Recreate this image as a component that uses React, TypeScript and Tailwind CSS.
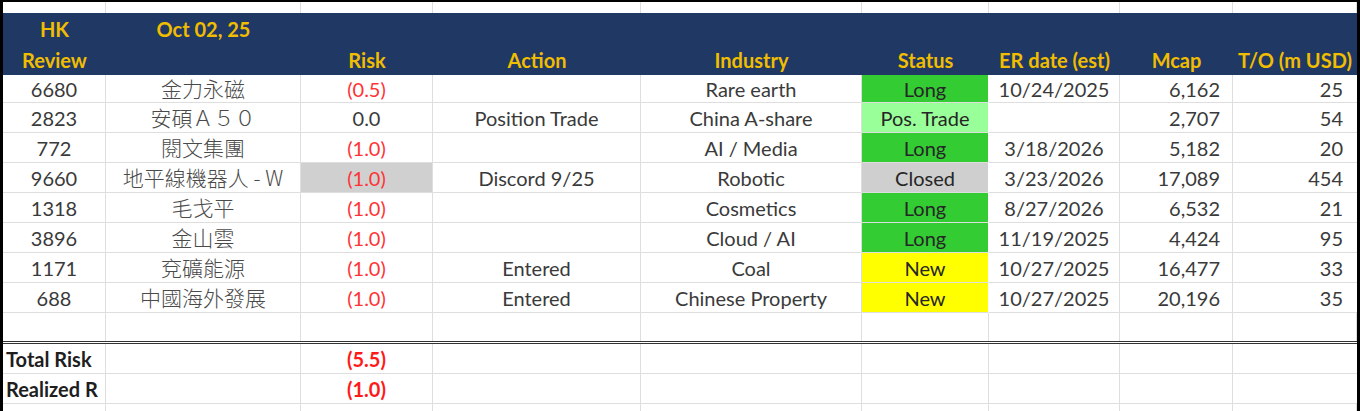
const rows = [
  { code: "6680", name: "金力永磁", risk: "(0.5)", action: "", industry: "Rare earth", status: "Long", er: "10/24/2025", mcap: "6,162", to: "25" },
  { code: "2823", name: "安碩Ａ５０", risk: "0.0", action: "Position Trade", industry: "China A-share", status: "Pos. Trade", er: "", mcap: "2,707", to: "54" },
  { code: "772", name: "閱文集團", risk: "(1.0)", action: "", industry: "AI / Media", status: "Long", er: "3/18/2026", mcap: "5,182", to: "20" },
  { code: "9660", name: "地平線機器人 - W", risk: "(1.0)", action: "Discord 9/25", industry: "Robotic", status: "Closed", er: "3/23/2026", mcap: "17,089", to: "454" },
  { code: "1318", name: "毛戈平", risk: "(1.0)", action: "", industry: "Cosmetics", status: "Long", er: "8/27/2026", mcap: "6,532", to: "21" },
  { code: "3896", name: "金山雲", risk: "(1.0)", action: "", industry: "Cloud / AI", status: "Long", er: "11/19/2025", mcap: "4,424", to: "95" },
  { code: "1171", name: "兗礦能源", risk: "(1.0)", action: "Entered", industry: "Coal", status: "New", er: "10/27/2025", mcap: "16,477", to: "33" },
  { code: "688", name: "中國海外發展", risk: "(1.0)", action: "Entered", industry: "Chinese Property", status: "New", er: "10/27/2025", mcap: "20,196", to: "35" },
];

const statusBg: Record<string, string> = {
  Long: "bg-[#33cc33]",
  "Pos. Trade": "bg-[#99ff99]",
  Closed: "bg-[#cfcfcf]",
  New: "bg-[#ffff00]",
};

const cols = "grid grid-cols-[103px_195px_132px_208px_221px_127px_131px_113px_124px]";
const cell = "flex items-center justify-center border-r border-b border-[#dedede]";
const gold = "text-[#f0bd00]";

function BlankRow({ h }: { h: string }) {
  return (
    <div className={`${cols} ${h}`}>
      {Array.from({ length: 9 }).map((_, i) => (
        <div key={i} className="border-r border-[#dedede]" />
      ))}
    </div>
  );
}

export default function App() {
  return (
    <div
      className="w-[1360px] h-[411px] overflow-hidden bg-white border-l-[3px] border-r-[3px] border-t-2 border-black text-[20px] text-[#3a3a3a] leading-none"
      style={{ fontFamily: "Lato, 'Noto Sans CJK TC', sans-serif" }}
    >
      {/* top spare row */}
      <BlankRow h="h-[11px]" />

      {/* header */}
      <div className={`${cols} bg-[#203864] font-bold ${gold}`}>
        <div className="h-[31px] flex items-center justify-center pt-[1px]">HK</div>
        <div className="h-[31px] flex items-center justify-center pt-[1px]">Oct 02, 25</div>
        <div />
        <div />
        <div />
        <div />
        <div />
        <div />
        <div />
        <div className="h-[31px] flex items-center justify-center">Review</div>
        <div />
        <div className="flex items-center justify-center">Risk</div>
        <div className="flex items-center justify-center">Action</div>
        <div className="flex items-center justify-center">Industry</div>
        <div className="flex items-center justify-center">Status</div>
        <div className="flex items-center justify-center">ER date (est)</div>
        <div className="flex items-center justify-center">Mcap</div>
        <div className="flex items-center justify-center">T/O (m USD)</div>
      </div>

      {/* data rows */}
      {rows.map((r, i) => (
        <div key={r.code} className={`${cols} ${i === 0 ? "h-[28px]" : "h-[30px]"}`}>
          <div className={cell}>{r.code}</div>
          <div
            className={`${cell} text-[21px] text-[#4a4a4a] whitespace-pre`}
            style={{ fontFamily: "'Noto Sans CJK TC', sans-serif", fontWeight: 300 }}
          >
            {r.name}
          </div>
          <div
            className={`${cell} ${r.risk === "0.0" ? "" : "text-[#ff3333]"} ${r.status === "Closed" ? "bg-[#d0d0d0]" : ""}`}
          >
            {r.risk}
          </div>
          <div className={cell}>{r.action}</div>
          <div className={cell}>{r.industry}</div>
          <div className={`${cell} ${statusBg[r.status]} text-[#262626] border-r-white`}>{r.status}</div>
          <div className={cell}>{r.er}</div>
          <div className={`${cell} justify-end pr-3`}>{r.mcap}</div>
          <div className={`${cell} justify-end pr-[14px] border-r-0`}>{r.to}</div>
        </div>
      ))}

      {/* empty row with double bottom rule */}
      <div className={`${cols} h-[31px] border-b-[3px] border-double border-b-[#333333]`}>
        {Array.from({ length: 9 }).map((_, i) => (
          <div key={i} className="border-r border-[#dedede]" />
        ))}
      </div>

      {/* totals */}
      {[
        { label: "Total Risk", value: "(5.5)" },
        { label: "Realized R", value: "(1.0)" },
      ].map((t) => (
        <div key={t.label} className={`${cols} h-[30px] font-bold`}>
          <div className={`${cell} justify-start pl-[3px] text-[#1e1e1e] whitespace-nowrap`}>{t.label}</div>
          <div className={cell} />
          <div className={`${cell} text-[#ff1a1a]`}>{t.value}</div>
          <div className={cell} />
          <div className={cell} />
          <div className={cell} />
          <div className={cell} />
          <div className={cell} />
          <div className={`${cell} border-r-0`} />
        </div>
      ))}

      <BlankRow h="h-[10px]" />
    </div>
  );
}
